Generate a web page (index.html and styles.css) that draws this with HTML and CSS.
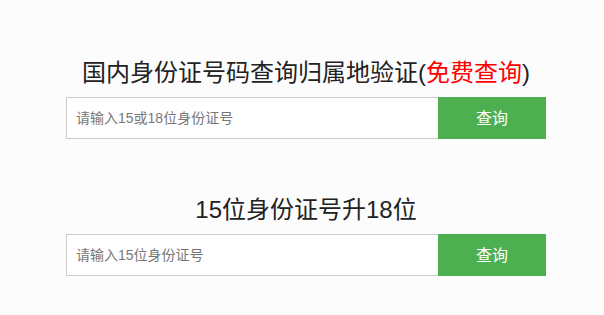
FILE: index.html
```html
<!DOCTYPE html>
<html>
<head>
    <meta charset="utf-8">
    <title>身份证号码查询</title>
    <link rel="stylesheet" href="styles.css">
</head>
<body>
    <div class="wrap">
        <div class="query-section">
            <h2>国内身份证号码查询归属地验证(<span class="free">免费查询</span>)</h2>
            <form class="query-form" onsubmit="return false;">
                <input type="text" class="query-input" placeholder="请输入15或18位身份证号">
                <button type="submit" class="query-btn">查询</button>
            </form>
        </div>

        <div class="query-section second">
            <h2>15位身份证号升18位</h2>
            <form class="query-form" onsubmit="return false;">
                <input type="text" class="query-input" placeholder="请输入15位身份证号">
                <button type="submit" class="query-btn">查询</button>
            </form>
        </div>
    </div>
</body>
</html>
```

FILE: styles.css
```css
body { margin: 0 0 0 8px; background: #fcfcfc; font-family: "Liberation Sans", "Noto Sans CJK SC", sans-serif; color: #333; }
.wrap { width: 480px; margin: 0 auto; padding-top: 55px; }
.query-section h2 { margin: 0 0 6px; font-size: 24px; line-height: 36px; font-weight: normal; text-align: center; color: #222; }
.query-section.second { margin-top: 53px; }
.free { color: #f00; }
.query-form { display: flex; margin: 0; }
.query-input { flex: 1; height: 42px; box-sizing: border-box; border: 1px solid #ccc; border-right: none; padding: 0 9px; font-size: 14px; font-family: inherit; background: #fff; outline: none; }
.query-input::placeholder { color: #777; }
.query-btn { width: 108px; height: 42px; border: none; background: #4caf50; color: #fff; font-size: 16px; font-family: inherit; cursor: pointer; padding: 0 0 3px; }
```
